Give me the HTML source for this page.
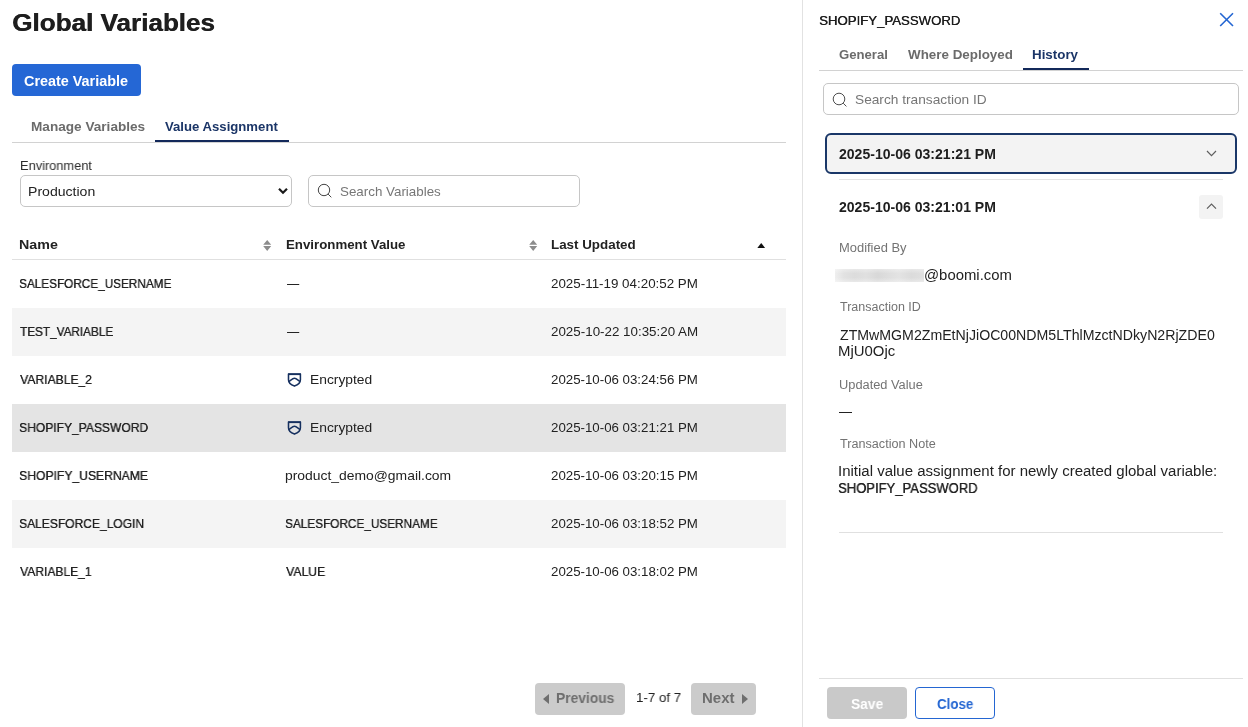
<!DOCTYPE html>
<html><head><meta charset="utf-8"><title>Global Variables</title>
<style>
html,body{margin:0;padding:0;background:#fff;width:1248px;height:727px;overflow:hidden;position:relative;font-family:"Liberation Sans",sans-serif;}
.t{position:absolute;white-space:nowrap;line-height:20px;transform-origin:0 50%;will-change:transform;}
.b{position:absolute;box-sizing:border-box;}
</style></head><body>
<!-- left panel -->
<div class="b" style="left:12px;top:64px;width:129px;height:32px;background:#2567d5;border-radius:4px"></div>
<div class="b" style="left:12px;top:142px;width:774px;height:1px;background:#d2d2d2"></div>
<div class="b" style="left:155px;top:140px;width:134px;height:2px;background:#13295a"></div>
<div class="b" style="left:20px;top:175px;width:272px;height:32px;border:1px solid #c6c6c6;border-radius:5px;background:#fff"></div>
<svg class="b" style="left:276px;top:185px" width="14" height="12" viewBox="0 0 14 12"><path d="M3 3.8 L7 7.8 L11 3.8" fill="none" stroke="#1a1a1a" stroke-width="2.2"/></svg>
<div class="b" style="left:308px;top:175px;width:272px;height:32px;border:1px solid #c6c6c6;border-radius:5px;background:#fff"></div>
<svg class="b" style="left:316px;top:182px" width="18" height="18" viewBox="0 0 18 18"><circle cx="8" cy="8" r="5.7" fill="none" stroke="#3a3a3a" stroke-width="0.95"/><path d="M12.1 12.1 L15.3 15.3" stroke="#3a3a3a" stroke-width="0.95"/></svg>
<svg class="b" style="left:263px;top:239px" width="9" height="13" viewBox="0 0 9 13"><path d="M0.2 5.7 L4.2 0.9 L8.2 5.7 Z M0.2 7.1 L8.2 7.1 L4.2 11.9 Z" fill="#8c8c8c"/></svg>
<svg class="b" style="left:529px;top:239px" width="9" height="13" viewBox="0 0 9 13"><path d="M0.2 5.7 L4.2 0.9 L8.2 5.7 Z M0.2 7.1 L8.2 7.1 L4.2 11.9 Z" fill="#8c8c8c"/></svg>
<svg class="b" style="left:757px;top:242px" width="9" height="7" viewBox="0 0 9 7"><path d="M0.3 5.9 L4.2 1.0 L8.1 5.9 Z" fill="#111"/></svg>
<div class="b" style="left:12px;top:259px;width:774px;height:1px;background:#e0e0e0"></div>
<div class="b" style="left:12px;top:308px;width:774px;height:48px;background:#f4f4f4"></div>
<div class="b" style="left:12px;top:404px;width:774px;height:48px;background:#e4e4e4"></div>
<div class="b" style="left:12px;top:500px;width:774px;height:48px;background:#f4f4f4"></div>
<div class="b" style="left:286.6px;top:372.5px;width:15px;height:15px"><svg width="15" height="15" viewBox="0 0 15 15"><path d="M1.5 1.1 H13.4 V6.8 C13.4 9.9 10.6 12.1 7.45 13.1 C4.3 12.1 1.5 9.9 1.5 6.8 Z" fill="none" stroke="#16305f" stroke-width="1.55" stroke-linejoin="round"/><rect x="1" y="0.5" width="12.9" height="1.6" fill="#16305f"/><path d="M1.9 8.6 C3.5 7.6 5.6 5.2 7.45 5.2 C9.3 5.2 11.4 7.6 13 8.6" fill="none" stroke="#16305f" stroke-width="1.45"/></svg></div>
<div class="b" style="left:286.6px;top:420.5px;width:15px;height:15px"><svg width="15" height="15" viewBox="0 0 15 15"><path d="M1.5 1.1 H13.4 V6.8 C13.4 9.9 10.6 12.1 7.45 13.1 C4.3 12.1 1.5 9.9 1.5 6.8 Z" fill="none" stroke="#16305f" stroke-width="1.55" stroke-linejoin="round"/><rect x="1" y="0.5" width="12.9" height="1.6" fill="#16305f"/><path d="M1.9 8.6 C3.5 7.6 5.6 5.2 7.45 5.2 C9.3 5.2 11.4 7.6 13 8.6" fill="none" stroke="#16305f" stroke-width="1.45"/></svg></div>
<div class="b" style="left:535px;top:683px;width:90px;height:32px;background:#cbcbcb;border-radius:4px"></div>
<svg class="b" style="left:541px;top:692px" width="10" height="14" viewBox="0 0 10 14"><path d="M8 2 L2 7 L8 12 Z" fill="#6e6e6e"/></svg>
<div class="b" style="left:691px;top:683px;width:65px;height:32px;background:#cbcbcb;border-radius:4px"></div>
<svg class="b" style="left:740px;top:692px" width="10" height="14" viewBox="0 0 10 14"><path d="M2 2 L8 7 L2 12 Z" fill="#6e6e6e"/></svg>
<!-- right panel -->
<div class="b" style="left:802px;top:0;width:1px;height:727px;background:#e2e2e2"></div>
<svg class="b" style="left:1218px;top:11px" width="17" height="17" viewBox="0 0 17 17"><path d="M2.2 2.2 L15 15 M15 2.2 L2.2 15" stroke="#2466d2" stroke-width="1.6"/></svg>
<div class="b" style="left:819px;top:70px;width:424px;height:1px;background:#d2d2d2"></div>
<div class="b" style="left:1023px;top:68px;width:66px;height:2px;background:#13295a"></div>
<div class="b" style="left:823px;top:83px;width:416px;height:32px;border:1px solid #c6c6c6;border-radius:5px;background:#fff"></div>
<svg class="b" style="left:831px;top:91px" width="18" height="18" viewBox="0 0 18 18"><circle cx="8" cy="8" r="5.8" fill="none" stroke="#444" stroke-width="0.95"/><path d="M12.2 12.2 L15.4 15.4" stroke="#444" stroke-width="0.95"/></svg>
<div class="b" style="left:825px;top:133px;width:412px;height:41px;border:2px solid #1a3768;border-radius:6px;background:#f3f3f3"></div>
<svg class="b" style="left:1204px;top:147px" width="15" height="13" viewBox="0 0 15 13"><path d="M3 4 L7.5 8.6 L12 4" fill="none" stroke="#5e5e5e" stroke-width="1.2"/></svg>
<div class="b" style="left:839px;top:179px;width:384px;height:1px;background:#e4e4e4"></div>
<div class="b" style="left:1199px;top:195px;width:24px;height:24px;background:#f3f3f3;border-radius:3px"></div>
<svg class="b" style="left:1204px;top:200px" width="15" height="13" viewBox="0 0 15 13"><path d="M3 8.6 L7.5 4 L12 8.6" fill="none" stroke="#5e5e5e" stroke-width="1.2"/></svg>
<div class="b" style="left:835px;top:269px;width:89px;height:13px;background:linear-gradient(90deg,#efefef 0%,#e2e2e2 10%,#dcdcdc 22%,#e0e0e0 35%,#d8d8d8 48%,#dedede 60%,#e3e3e3 72%,#dbdbdb 86%,#e0e0e0 100%)"></div><div class="b" style="left:835px;top:269px;width:89px;height:13px;background:linear-gradient(180deg,rgba(255,255,255,0.35) 0%,rgba(255,255,255,0) 35%,rgba(255,255,255,0) 65%,rgba(255,255,255,0.35) 100%)"></div>
<div class="b" style="left:839px;top:412px;width:13px;height:1.3px;background:#222"></div>
<div class="b" style="left:839px;top:532px;width:384px;height:1px;background:#e0e0e0"></div>
<div class="b" style="left:819px;top:678px;width:424px;height:1px;background:#e0e0e0"></div>
<div class="b" style="left:827px;top:687px;width:80px;height:32px;background:#c9c9c9;border-radius:4px"></div>
<div class="b" style="left:915px;top:687px;width:80px;height:32px;border:1.5px solid #2466d2;border-radius:4px;background:#fff"></div>
<!-- text -->
<div class="t" id="t0" style="left:11.91px;top:13.0px;font-size:24px;font-weight:bold;color:#1e1e1e;transform:scaleX(1.0860);text-shadow:0.5px 0 0 #1e1e1e;">Global Variables</div>
<div class="t" id="t1" style="left:24.17px;top:71.0px;font-size:14px;font-weight:bold;color:#ffffff;transform:scaleX(1.0280);">Create Variable</div>
<div class="t" id="t2" style="left:30.95px;top:117.0px;font-size:13px;font-weight:bold;color:#6b6b6b;transform:scaleX(1.0463);">Manage Variables</div>
<div class="t" id="t3" style="left:165.40px;top:117.0px;font-size:13px;font-weight:bold;color:#1b3567;transform:scaleX(1.0116);">Value Assignment</div>
<div class="t" id="t4" style="left:19.51px;top:156.0px;font-size:13px;font-weight:normal;color:#2b2b2b;transform:scaleX(0.9861);">Environment</div>
<div class="t" id="t5" style="left:28.32px;top:182.0px;font-size:13px;font-weight:normal;color:#222222;transform:scaleX(1.0820);">Production</div>
<div class="t" id="t6" style="left:340.47px;top:182.0px;font-size:13px;font-weight:normal;color:#767676;transform:scaleX(1.0278);">Search Variables</div>
<div class="t" id="t7" style="left:19.40px;top:235.0px;font-size:13px;font-weight:bold;color:#222222;transform:scaleX(1.0971);">Name</div>
<div class="t" id="t8" style="left:285.98px;top:235.0px;font-size:13px;font-weight:bold;color:#222222;transform:scaleX(1.0207);">Environment Value</div>
<div class="t" id="t9" style="left:551.37px;top:235.0px;font-size:13px;font-weight:bold;color:#222222;transform:scaleX(1.0284);">Last Updated</div>
<div class="t" id="t10" style="left:19.30px;top:274.0px;font-size:13px;font-weight:normal;color:#222222;transform:scaleX(0.9042);text-shadow:0.25px 0 0 #222222;">SALESFORCE_USERNAME</div>
<div class="t" id="t11" style="left:286.60px;top:274.0px;font-size:13px;font-weight:normal;color:#222222;transform:scaleX(0.9231);text-shadow:0.25px 0 0 #222222;">—</div>
<div class="t" id="t12" style="left:551.27px;top:274.0px;font-size:13px;font-weight:normal;color:#222222;transform:scaleX(1.0284);">2025-11-19 04:20:52 PM</div>
<div class="t" id="t13" style="left:20.20px;top:322.0px;font-size:13px;font-weight:normal;color:#222222;transform:scaleX(0.9029);text-shadow:0.25px 0 0 #222222;">TEST_VARIABLE</div>
<div class="t" id="t14" style="left:286.60px;top:322.0px;font-size:13px;font-weight:normal;color:#222222;transform:scaleX(0.9231);text-shadow:0.25px 0 0 #222222;">—</div>
<div class="t" id="t15" style="left:551.27px;top:322.0px;font-size:13px;font-weight:normal;color:#222222;transform:scaleX(1.0284);">2025-10-22 10:35:20 AM</div>
<div class="t" id="t16" style="left:20.20px;top:370.0px;font-size:13px;font-weight:normal;color:#222222;transform:scaleX(0.9325);text-shadow:0.25px 0 0 #222222;">VARIABLE_2</div>
<div class="t" id="t17" style="left:309.54px;top:370.0px;font-size:13px;font-weight:normal;color:#222222;transform:scaleX(1.0632);">Encrypted</div>
<div class="t" id="t18" style="left:551.28px;top:370.0px;font-size:13px;font-weight:normal;color:#222222;transform:scaleX(1.0211);">2025-10-06 03:24:56 PM</div>
<div class="t" id="t19" style="left:19.27px;top:418.0px;font-size:13px;font-weight:normal;color:#222222;transform:scaleX(0.9275);text-shadow:0.25px 0 0 #222222;">SHOPIFY_PASSWORD</div>
<div class="t" id="t20" style="left:309.54px;top:418.0px;font-size:13px;font-weight:normal;color:#222222;transform:scaleX(1.0632);">Encrypted</div>
<div class="t" id="t21" style="left:551.28px;top:418.0px;font-size:13px;font-weight:normal;color:#222222;transform:scaleX(1.0211);">2025-10-06 03:21:21 PM</div>
<div class="t" id="t22" style="left:19.27px;top:466.0px;font-size:13px;font-weight:normal;color:#222222;transform:scaleX(0.9343);text-shadow:0.25px 0 0 #222222;">SHOPIFY_USERNAME</div>
<div class="t" id="t23" style="left:284.93px;top:466.0px;font-size:13px;font-weight:normal;color:#222222;transform:scaleX(1.0682);">product_demo@gmail.com</div>
<div class="t" id="t24" style="left:551.28px;top:466.0px;font-size:13px;font-weight:normal;color:#222222;transform:scaleX(1.0211);">2025-10-06 03:20:15 PM</div>
<div class="t" id="t25" style="left:19.28px;top:514.0px;font-size:13px;font-weight:normal;color:#222222;transform:scaleX(0.9248);text-shadow:0.25px 0 0 #222222;">SALESFORCE_LOGIN</div>
<div class="t" id="t26" style="left:285.09px;top:514.0px;font-size:13px;font-weight:normal;color:#222222;transform:scaleX(0.9060);text-shadow:0.25px 0 0 #222222;">SALESFORCE_USERNAME</div>
<div class="t" id="t27" style="left:551.28px;top:514.0px;font-size:13px;font-weight:normal;color:#222222;transform:scaleX(1.0211);">2025-10-06 03:18:52 PM</div>
<div class="t" id="t28" style="left:20.20px;top:562.0px;font-size:13px;font-weight:normal;color:#222222;transform:scaleX(0.9273);text-shadow:0.25px 0 0 #222222;">VARIABLE_1</div>
<div class="t" id="t29" style="left:286.00px;top:562.0px;font-size:13px;font-weight:normal;color:#222222;transform:scaleX(0.9390);text-shadow:0.25px 0 0 #222222;">VALUE</div>
<div class="t" id="t30" style="left:551.28px;top:562.0px;font-size:13px;font-weight:normal;color:#222222;transform:scaleX(1.0211);">2025-10-06 03:18:02 PM</div>
<div class="t" id="t31" style="left:555.71px;top:688.0px;font-size:14px;font-weight:bold;color:#6e6e6e;transform:scaleX(0.9879);">Previous</div>
<div class="t" id="t32" style="left:635.61px;top:688.0px;font-size:13.5px;font-weight:normal;color:#222222;transform:scaleX(0.9864);">1-7 of 7</div>
<div class="t" id="t33" style="left:701.53px;top:688.0px;font-size:14px;font-weight:bold;color:#6e6e6e;transform:scaleX(1.0690);">Next</div>
<div class="t" id="t34" style="left:818.79px;top:10.6px;font-size:13px;font-weight:normal;color:#1e1e1e;transform:scaleX(1.0145);text-shadow:0.4px 0 0 #1e1e1e;">SHOPIFY_PASSWORD</div>
<div class="t" id="t35" style="left:838.70px;top:45.0px;font-size:13px;font-weight:bold;color:#6b6b6b;transform:scaleX(1.0104);">General</div>
<div class="t" id="t36" style="left:908.40px;top:45.0px;font-size:13px;font-weight:bold;color:#6b6b6b;transform:scaleX(1.0297);">Where Deployed</div>
<div class="t" id="t37" style="left:1032.27px;top:45.0px;font-size:13px;font-weight:bold;color:#1b3567;transform:scaleX(1.0273);">History</div>
<div class="t" id="t38" style="left:855.35px;top:90.0px;font-size:13px;font-weight:normal;color:#767676;transform:scaleX(1.0537);">Search transaction ID</div>
<div class="t" id="t39" style="left:838.90px;top:144.0px;font-size:14px;font-weight:bold;color:#1e1e1e;transform:scaleX(1.0032);">2025-10-06 03:21:21 PM</div>
<div class="t" id="t40" style="left:838.90px;top:196.6px;font-size:14px;font-weight:bold;color:#1e1e1e;transform:scaleX(1.0032);">2025-10-06 03:21:01 PM</div>
<div class="t" id="t41" style="left:838.67px;top:238.0px;font-size:12.5px;font-weight:normal;color:#737373;transform:scaleX(1.0344);">Modified By</div>
<div class="t" id="t42" style="left:923.54px;top:264.7px;font-size:14px;font-weight:normal;color:#222222;transform:scaleX(1.0630);">@boomi.com</div>
<div class="t" id="t43" style="left:839.70px;top:297.0px;font-size:12.5px;font-weight:normal;color:#737373;transform:scaleX(0.9975);">Transaction ID</div>
<div class="t" id="t44" style="left:839.50px;top:324.6px;font-size:14px;font-weight:normal;color:#222222;transform:scaleX(1.0108);">ZTMwMGM2ZmEtNjJiOC00NDM5LThlMzctNDkyN2RjZDE0</div>
<div class="t" id="t45" style="left:838.43px;top:340.6px;font-size:14px;font-weight:normal;color:#222222;transform:scaleX(1.0654);">MjU0Ojc</div>
<div class="t" id="t46" style="left:838.68px;top:374.5px;font-size:12.5px;font-weight:normal;color:#737373;transform:scaleX(1.0250);">Updated Value</div>
<div class="t" id="t47" style="left:839.70px;top:434.4px;font-size:12.5px;font-weight:normal;color:#737373;transform:scaleX(1.0106);">Transaction Note</div>
<div class="t" id="t48" style="left:838.23px;top:461.0px;font-size:14px;font-weight:normal;color:#222222;transform:scaleX(1.0710);">Initial value assignment for newly created global variable:</div>
<div class="t" id="t49" style="left:838.37px;top:478.0px;font-size:14px;font-weight:normal;color:#222222;transform:scaleX(0.9304);text-shadow:0.25px 0 0 #222222;">SHOPIFY_PASSWORD</div>
<div class="t" id="t50" style="left:850.72px;top:694.0px;font-size:14px;font-weight:bold;color:#ffffff;transform:scaleX(0.9839);">Save</div>
<div class="t" id="t51" style="left:937.35px;top:694.0px;font-size:14px;font-weight:bold;color:#2466d2;transform:scaleX(0.9541);">Close</div>
</body></html>
